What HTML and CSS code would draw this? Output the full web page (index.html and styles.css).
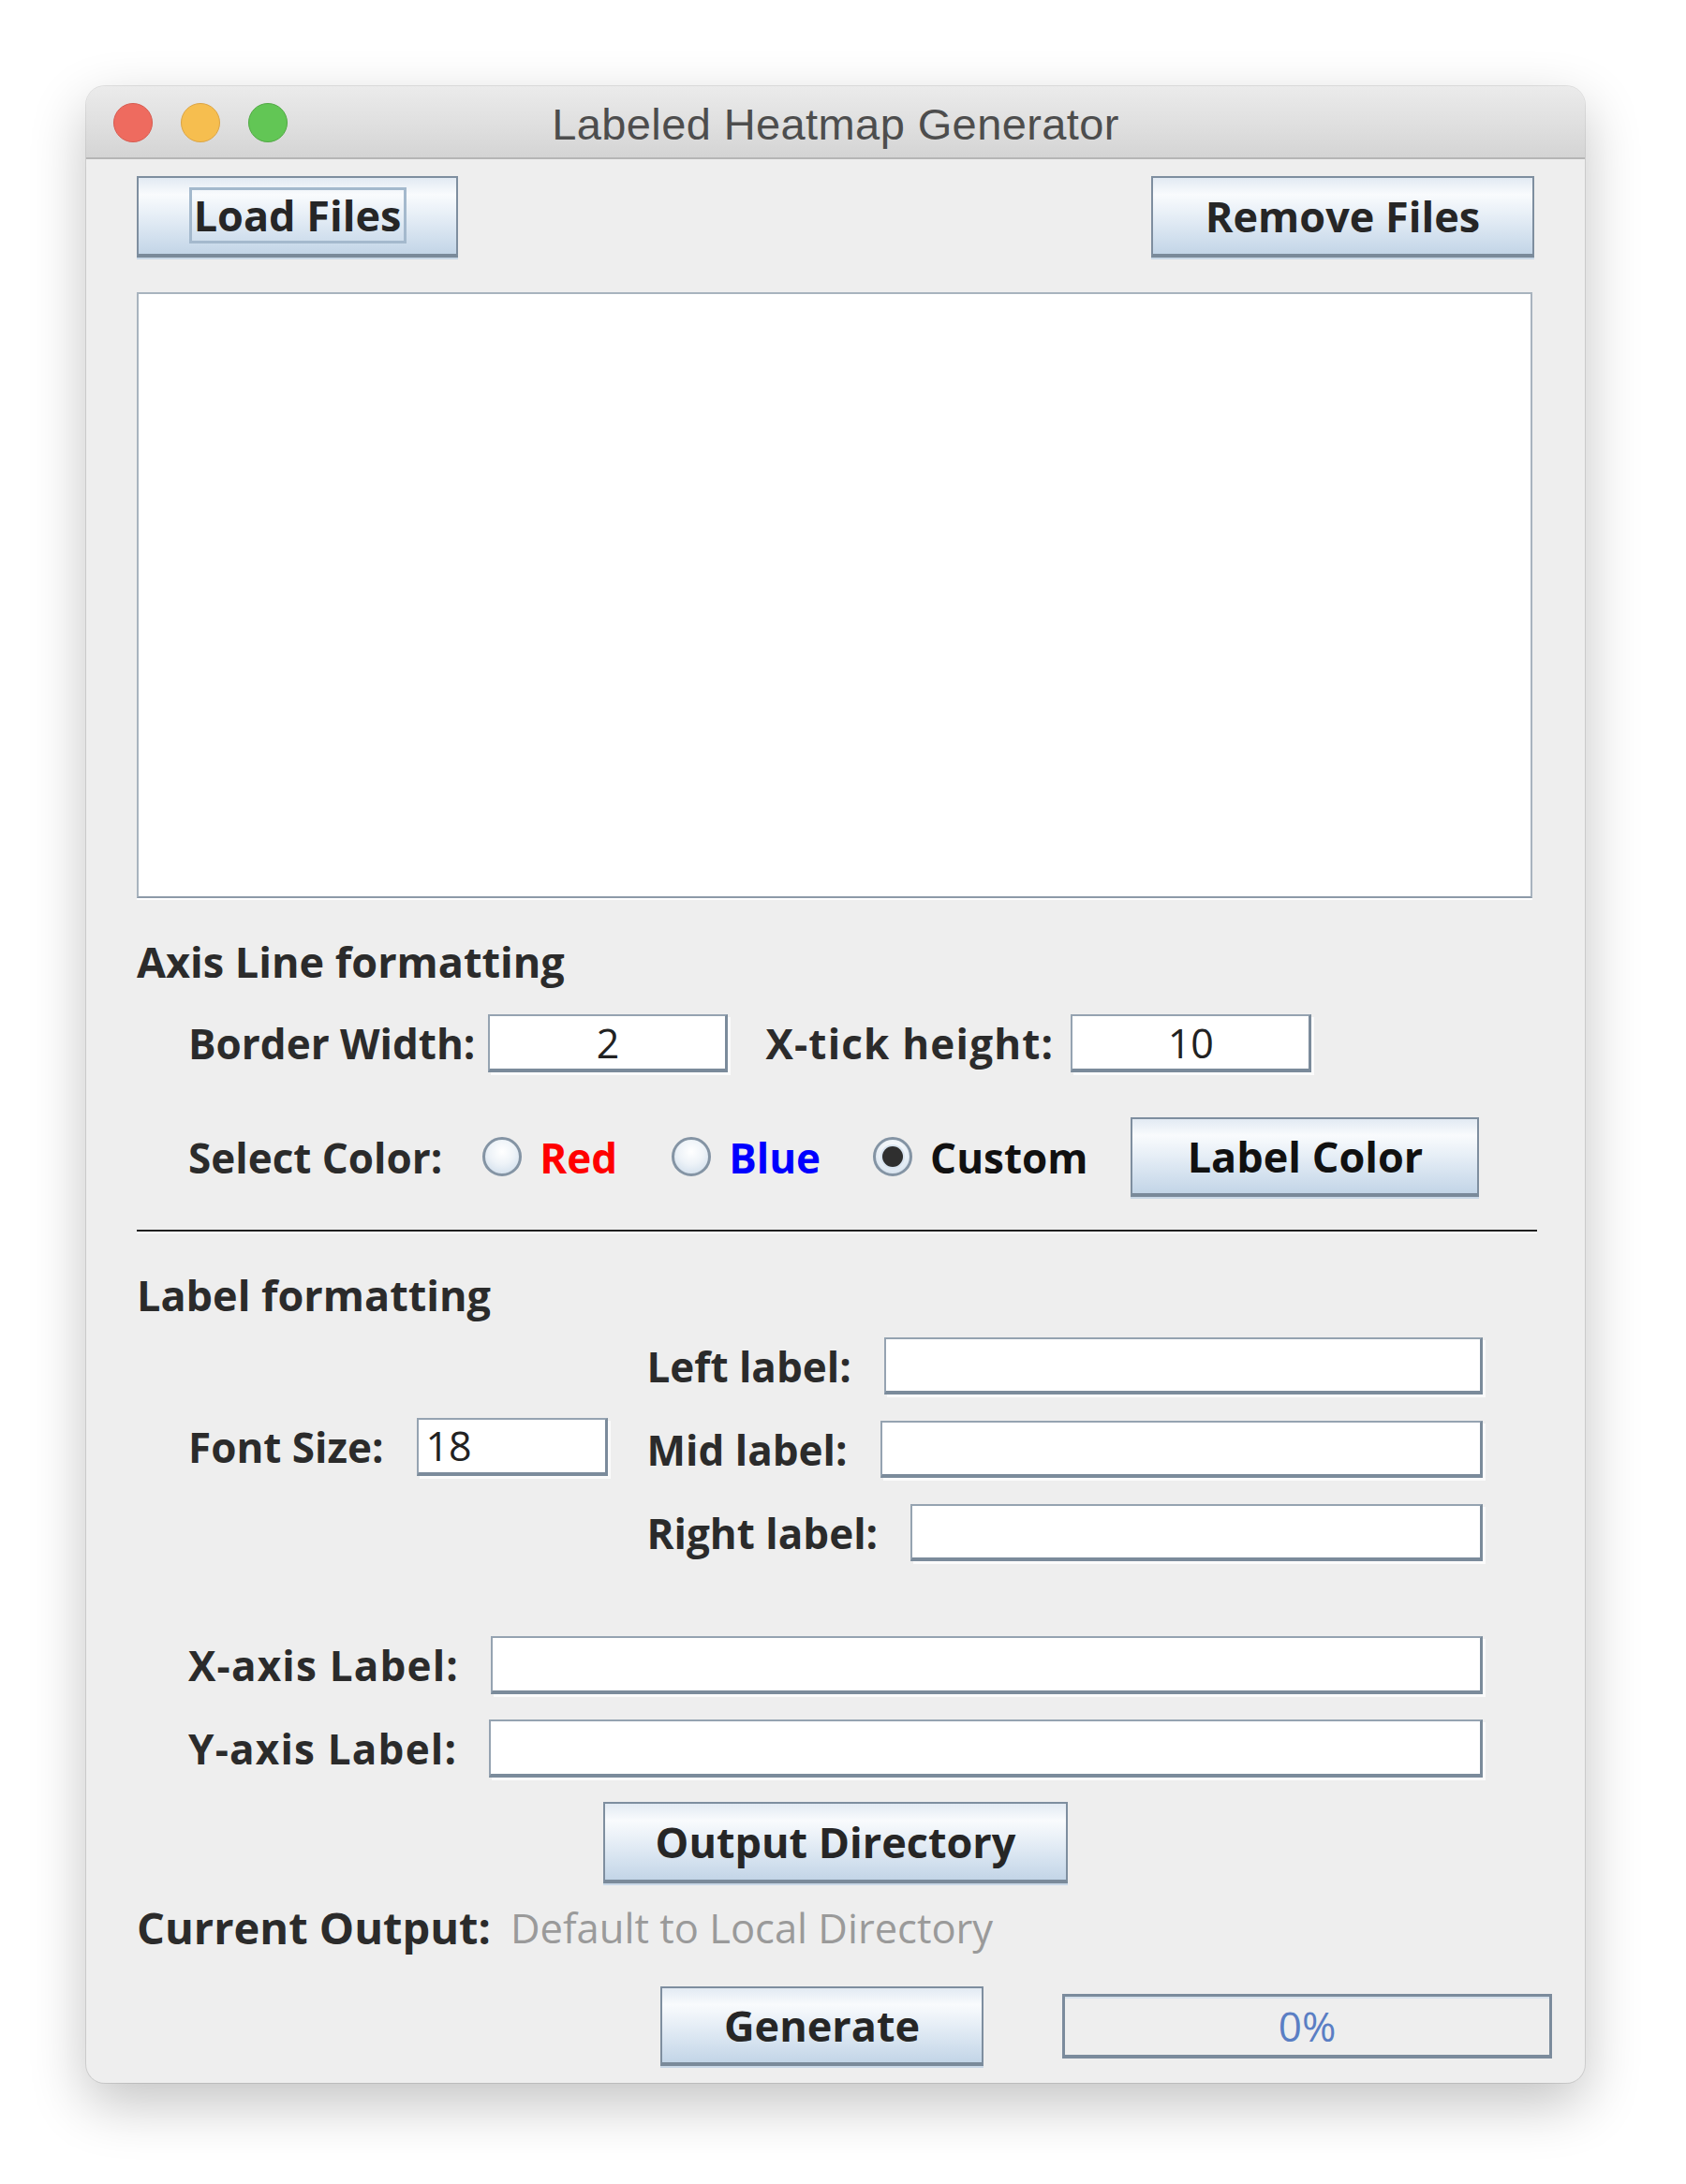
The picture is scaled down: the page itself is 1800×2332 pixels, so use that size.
FILE: index.html
```html
<!DOCTYPE html>
<html lang="en">
<head>
<meta charset="utf-8">
<title>Labeled Heatmap Generator</title>
<link rel="stylesheet" href="styles.css">
</head>
<body>
<div class="window">
  <div class="titlebar">
    <div class="lights">
      <span class="light red"></span>
      <span class="light yellow"></span>
      <span class="light green"></span>
    </div>
    <div class="title">Labeled Heatmap Generator</div>
    <div class="titlebar-spacer"></div>
  </div>
  <div class="content">
    <div class="top-buttons">
      <button class="btn btn-load"><span class="focus-ring">Load Files</span></button>
      <button class="btn btn-remove">Remove Files</button>
    </div>

    <div class="filelist"></div>

    <div class="heading heading-axis">Axis Line formatting</div>

    <div class="row row-border">
      <span class="lbl">Border Width:</span>
      <div class="field field-center w-border">2</div>
      <span class="lbl lbl-wide lbl-xtick">X-tick height:</span>
      <div class="field field-center w-xtick">10</div>
    </div>

    <div class="row row-color">
      <span class="lbl">Select Color:</span>
      <span class="radio radio-first"></span>
      <span class="opt opt-red">Red</span>
      <span class="radio"></span>
      <span class="opt opt-blue">Blue</span>
      <span class="radio radio-on"></span>
      <span class="opt opt-custom">Custom</span>
      <button class="btn btn-labelcolor">Label Color</button>
    </div>

    <div class="separator"></div>

    <div class="heading heading-label">Label formatting</div>

    <div class="label-block">
      <div class="font-size">
        <span class="lbl">Font Size:</span>
        <div class="field w-font">18</div>
      </div>
      <div class="pos-labels">
        <div class="pos-row"><span class="lbl">Left label:</span><div class="field grow"></div></div>
        <div class="pos-row"><span class="lbl">Mid label:</span><div class="field grow"></div></div>
        <div class="pos-row"><span class="lbl">Right label:</span><div class="field grow"></div></div>
      </div>
    </div>

    <div class="row axis-row axis-x">
      <span class="lbl lbl-wide">X-axis Label:</span>
      <div class="field grow"></div>
    </div>
    <div class="row axis-row axis-y">
      <span class="lbl lbl-wide">Y-axis Label:</span>
      <div class="field grow"></div>
    </div>

    <div class="output-row">
      <button class="btn btn-output">Output Directory</button>
    </div>

    <div class="current-output">
      <span class="current-lbl">Current Output:</span>
      <span class="current-val">Default to Local Directory</span>
    </div>

    <div class="generate-row">
      <button class="btn btn-generate">Generate</button>
      <div class="progress">0%</div>
    </div>
  </div>
</div>
</body>
</html>
```

FILE: styles.css
```css
* { box-sizing: border-box; }

html, body {
  margin: 0;
  padding: 0;
  background: #ffffff;
}

body {
  width: 1800px;
  height: 2332px;
  padding-top: 92px;
  padding-left: 92px;
  font-family: "Open Sans", "Liberation Sans", sans-serif;
}

.window {
  width: 1600px;
  height: 2132px;
  background: #eeeeee;
  border-radius: 20px;
  overflow: hidden;
  box-shadow: 0 0 0 1px rgba(0, 0, 0, 0.1), 0 22px 60px rgba(0, 0, 0, 0.24);
  display: flex;
  flex-direction: column;
}

/* ---------- title bar ---------- */
.titlebar {
  height: 78px;
  flex: none;
  display: grid;
  grid-template-columns: 1fr auto 1fr;
  align-items: center;
  background: linear-gradient(to bottom, #ebebeb 0%, #dedede 60%, #d4d4d4 100%);
  border-bottom: 2px solid #b5b5b5;
}

.lights {
  display: flex;
  gap: 30px;
  padding-left: 29px;
  padding-top: 2px;
}

.light {
  width: 42px;
  height: 42px;
  border-radius: 50%;
  display: block;
}
.light.red { background: #ee6b5f; border: 1px solid #d65c51; }
.light.yellow { background: #f6be4f; border: 1px solid #dba444; }
.light.green { background: #62c655; border: 1px solid #52a945; }

.title {
  font-family: "Liberation Sans", "Open Sans", sans-serif;
  font-size: 47px;
  color: #4d4d4d;
  letter-spacing: 0.4px;
  padding-top: 4px;
}

/* ---------- content ---------- */
.content {
  flex: 1;
  padding: 18px 54px 0 54px;
  display: flex;
  flex-direction: column;
  color: #2b2b2b;
}

.btn {
  font-family: "Open Sans", "Liberation Sans", sans-serif;
  font-weight: 700;
  font-size: 45px;
  color: #262626;
  border: 2px solid #7e8e9f;
  border-bottom: 4px solid #7a8a9a;
  background: linear-gradient(to bottom, #e2eaf3 0%, #f9fbfd 22%, #e6eef6 50%, #d2e0ee 78%, #c3d5e7 100%);
  box-shadow: 0 2px 0 #c9d8e7;
  padding: 0;
  margin: 0;
  display: flex;
  align-items: center;
  justify-content: center;
  line-height: 1;
}

.top-buttons {
  display: flex;
  justify-content: space-between;
  height: 87px;
}

.btn-load { width: 343px; height: 87px; }
.btn-remove { width: 409px; height: 87px; }

.focus-ring {
  display: flex;
  align-items: center;
  justify-content: center;
  width: 232px;
  height: 60px;
  border: 3px solid #a4b9cd;
  margin-top: -2px;
}

.filelist {
  margin-top: 37px;
  width: 1490px;
  height: 647px;
  background: #ffffff;
  border: 2px solid #a8b3be;
  border-bottom-color: #8d9aa8;
  box-shadow: 0 2px 0 #ffffff;
}

.heading {
  height: 60px;
  display: flex;
  align-items: center;
  font-weight: 700;
  font-size: 45px;
  color: #2b2b2b;
}
.heading-axis { margin-top: 37px; }
.heading-label { margin-top: 35px; }

.lbl {
  font-weight: 700;
  font-size: 44px;
  color: #2b2b2b;
  white-space: nowrap;
}
.lbl-wide { letter-spacing: 1.2px; }

.row {
  display: flex;
  align-items: center;
  padding-left: 55px;
}

.field {
  height: 62px;
  background: #ffffff;
  border-top: 2px solid #95a3b1;
  border-left: 2px solid #95a3b1;
  border-right: 3px solid #7b8b9b;
  border-bottom: 4px solid #7b8b9b;
  box-shadow: 3px 3px 0 #fbfbfb;
  font-size: 43px;
  color: #222;
  display: flex;
  align-items: center;
  padding-left: 8px;
  line-height: 1;
}
.field-center { justify-content: center; padding-left: 0; }
.grow { flex: 1; }

.row-border { margin-top: 27px; height: 62px; }
.w-border { width: 256px; margin-left: 14px; }
.lbl-xtick { margin-left: 40px; }
.w-xtick { width: 257px; margin-left: 18px; }

.row-color { margin-top: 48px; height: 85px; }

.radio {
  width: 42px;
  height: 42px;
  border-radius: 50%;
  border: 3px solid #8494a4;
  background: radial-gradient(circle at 50% 35%, #ffffff 0%, #eef3f8 45%, #c9d9e9 100%);
  margin-left: 58px;
  flex: none;
  display: flex;
  align-items: center;
  justify-content: center;
  margin-top: -2px;
}
.radio-first { margin-left: 43px; }
.radio-on { margin-left: 56px; }
.radio-on::after {
  content: "";
  width: 22px;
  height: 22px;
  border-radius: 50%;
  background: #2f2f2f;
  box-shadow: 0 0 0 2px #d7e3ef;
}

.opt {
  font-weight: 700;
  font-size: 44px;
  margin-left: 19px;
}
.opt-red { color: #ff0000; }
.opt-blue { color: #0000ff; }
.opt-custom { color: #111111; }

.btn-labelcolor {
  width: 372px;
  height: 85px;
  margin-left: 46px;
  color: #111;
}

.separator {
  margin-top: 35px;
  width: 1495px;
  height: 4px;
  border-top: 2px solid #1f1f1f;
  border-bottom: 2px solid #ffffff;
}

.label-block {
  margin-top: 16px;
  display: flex;
  align-items: center;
  padding-left: 55px;
  width: 1437px;
}

.font-size {
  display: flex;
  align-items: center;
  gap: 35px;
  margin-top: -6px;
}
.w-font { width: 204px; }

.pos-labels {
  flex: 1;
  margin-left: 42px;
  display: flex;
  flex-direction: column;
  gap: 28px;
}

.pos-row {
  display: flex;
  align-items: center;
  gap: 35px;
  height: 61px;
}
.pos-row .field { height: 61px; }

.axis-row {
  width: 1437px;
  height: 62px;
}
.axis-row .field { margin-left: 34px; }
.axis-x { margin-top: 80px; }
.axis-y { margin-top: 27px; }

.output-row {
  margin-top: 26px;
  display: flex;
  justify-content: center;
  width: 1492px;
}
.btn-output { width: 496px; height: 87px; }

.current-output {
  margin-top: 17px;
  height: 60px;
  display: flex;
  align-items: center;
  white-space: nowrap;
}
.current-lbl {
  font-weight: 700;
  font-size: 47px;
  color: #2b2b2b;
}
.current-val {
  margin-left: 21px;
  font-size: 43.5px;
  color: #9a9a9a;
}

.generate-row {
  margin-top: 33px;
  display: flex;
  align-items: center;
  justify-content: flex-end;
  margin-right: -19px;
  gap: 84px;
}
.btn-generate { width: 345px; height: 85px; }

.progress {
  width: 523px;
  height: 69px;
  border: 3px solid #7b8b9c;
  border-bottom-width: 4px;
  background: #eeeeee;
  box-shadow: inset 0 2px 0 #d6e1ec;
  display: flex;
  align-items: center;
  justify-content: center;
  font-size: 44px;
  color: #5a7ec4;
}
```
